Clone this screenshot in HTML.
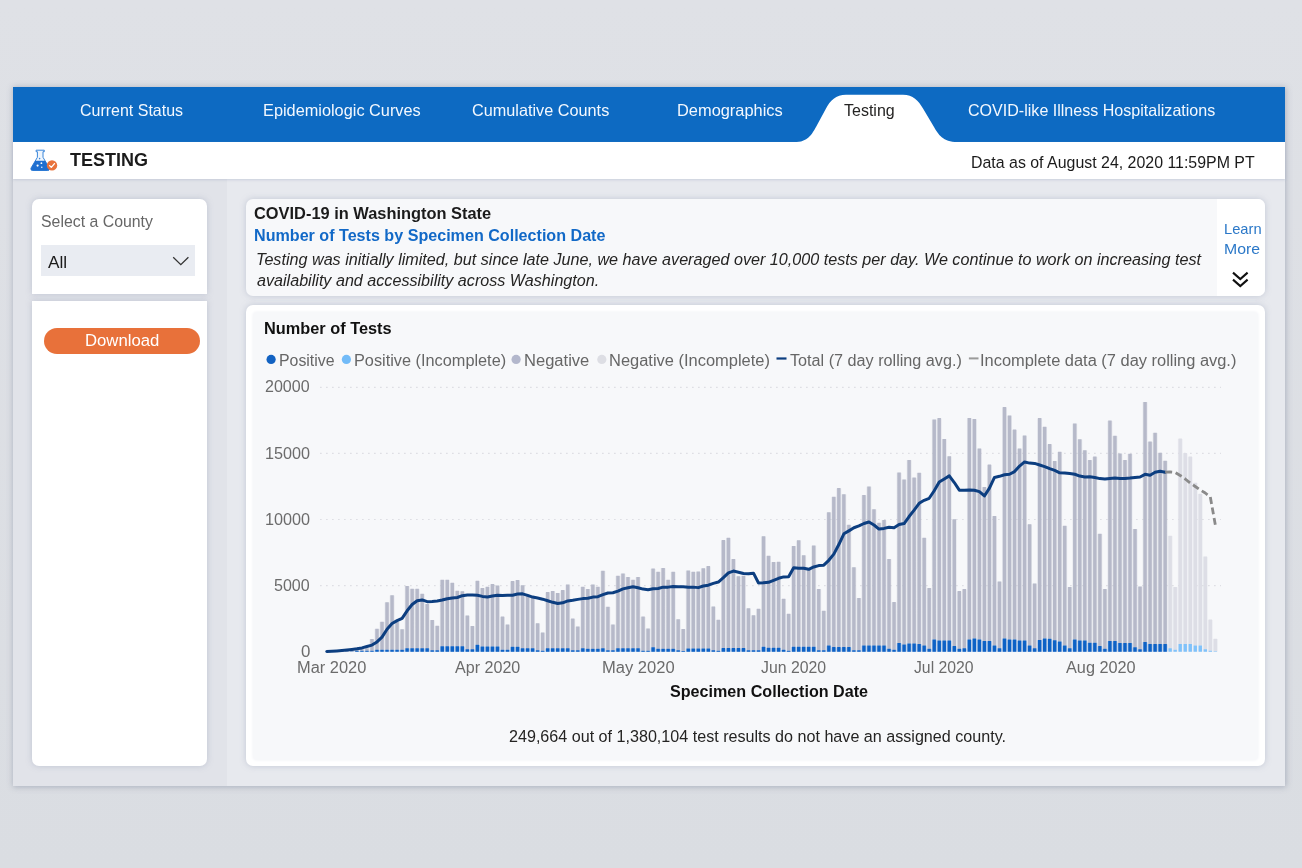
<!DOCTYPE html>
<html lang="en"><head><meta charset="utf-8"><title>COVID-19 Testing</title>
<style>
html,body{margin:0;padding:0}
body{width:1302px;height:868px;overflow:hidden;background:linear-gradient(#dfe1e6,#dadde2);position:relative;font-family:"Liberation Sans", Arial, sans-serif}
.abs{position:absolute}
.t{position:absolute;white-space:nowrap;line-height:1;transform-origin:0 50%;display:inline-block}
#frame{left:12.7px;top:87.3px;width:1272.2px;height:698.3px;background:#e7e9ee;box-shadow:0 0 6px 0.5px rgba(105,115,140,.42)}
#leftcol{left:12.7px;top:179px;width:214.5px;height:606.6px;background:#e1e3e9}
#nav{left:12.7px;top:87.3px;width:1272.2px;height:54.6px;background:#0d6ac2}
#titlebar{left:12.7px;top:141.8px;width:1272.2px;height:37.4px;background:#ffffff;box-shadow:0 1px 2.5px rgba(150,160,185,.35)}
.card{background:#fff;border-radius:7px;box-shadow:0 0 6px rgba(130,140,170,.36)}
</style></head><body>
<div id="frame" class="abs"></div>
<div id="leftcol" class="abs"></div>
<div id="nav" class="abs"></div>
<div id="titlebar" class="abs"></div>
<svg class="abs" style="left:0;top:0" width="1302" height="200" viewBox="0 0 1302 200">
<path d="M794.5,142.2 C808,142.2 812,134 816,127 L826,108.5 C830,100.5 836,94.7 846,94.7 L903,94.7 C913,94.7 918.5,100.5 923,108.5 L934,127 C938,134 943,142.2 957,142.2 Z" fill="#ffffff"/>
<!-- flask icon -->
<g id="flask">
<path d="M36.1,150.2h8.2v1.5h-1.3v5.6l6.3,10.6c.7,1.3-.1,2.6-1.6,2.6H32.7c-1.5,0-2.3-1.3-1.6-2.6l6.3-10.6v-5.6h-1.3z" fill="#eef5fd" stroke="#3a86d9" stroke-width="1"/>
<path d="M35.3,160.8H45.1L49.3,167.9c.7,1.3-.1,2.6-1.6,2.6H32.7c-1.5,0-2.3-1.3-1.6-2.6z" fill="#1f6fd0"/>
<circle cx="37.6" cy="165.6" r="1.1" fill="#fff"/><circle cx="41.4" cy="163.2" r=".9" fill="#fff"/><circle cx="41.8" cy="167.2" r=".7" fill="#fff"/><circle cx="39.6" cy="158.6" r=".8" fill="#3a86d9"/>
<circle cx="52" cy="165.4" r="5.2" fill="#e9733c"/>
<path d="M49.6,165.6l1.7,1.8l3.2,-3.8" fill="none" stroke="#fff" stroke-width="1.3" stroke-linecap="round" stroke-linejoin="round"/>
</g>
</svg>
<!-- sidebar cards -->
<div class="abs card" style="left:31.6px;top:199.2px;width:175.8px;height:95px;border-radius:7px 7px 0 0"></div>
<div class="abs card" style="left:31.6px;top:300.5px;width:175.8px;height:465.7px;border-radius:0 0 7px 7px"></div>
<div class="abs" style="left:41.3px;top:244.8px;width:153.9px;height:31.7px;background:#e9ecf2"></div>
<svg class="abs" style="left:170px;top:252px" width="24" height="18" viewBox="0 0 24 18"><path d="M3.2,5.2 L10.8,12.6 L18.4,5.2" fill="none" stroke="#333" stroke-width="1.3"/></svg>
<div class="abs" style="left:44.4px;top:327.7px;width:155.9px;height:26.6px;border-radius:13.3px;background:#e8713a"></div>
<!-- description card -->
<div class="abs card" style="left:246.4px;top:198.7px;width:1018.2px;height:97px;background:#f7f8fa"></div>
<div class="abs" style="left:1217.4px;top:198.7px;width:47.2px;height:97px;background:#fff;border-radius:0 7px 7px 0"></div>
<svg class="abs" style="left:1228px;top:268px" width="26" height="24" viewBox="0 0 26 24"><path d="M5,4.6 L12.3,11 L19.6,4.6 M5,11.6 L12.3,18 L19.6,11.6" fill="none" stroke="#111" stroke-width="2.1"/></svg>
<!-- chart card -->
<div class="abs card" style="left:246.4px;top:305.2px;width:1018.4px;height:461.1px"></div>
<div class="abs" style="left:253.4px;top:312px;width:1004.6px;height:447.5px;background:#f7f8fa;border-radius:4px;box-shadow:0 0 2.5px 1px #f7f8fa"></div>
<svg class="abs" style="left:0;top:0" width="1302" height="868" viewBox="0 0 1302 868">
<circle cx="271.1" cy="359.4" r="4.6" fill="#1262c2"/>
<circle cx="346.4" cy="359.4" r="4.6" fill="#72bbf8"/>
<circle cx="516.1" cy="359.4" r="4.6" fill="#b3b7cc"/>
<circle cx="601.8" cy="359.4" r="4.6" fill="#dddee4"/>
<rect x="776.5" y="357.4" width="10" height="2.2" fill="#0c3e80"/>
<rect x="968.9" y="357.4" width="9.6" height="2" fill="#9a9a9a"/>
<line x1="320" x2="1221" y1="585.6" y2="585.6" stroke="#dedfe4" stroke-width="1.2" stroke-dasharray="1.7 4.3"/>
<line x1="320" x2="1221" y1="519.5" y2="519.5" stroke="#dedfe4" stroke-width="1.2" stroke-dasharray="1.7 4.3"/>
<line x1="320" x2="1221" y1="453.4" y2="453.4" stroke="#dedfe4" stroke-width="1.2" stroke-dasharray="1.7 4.3"/>
<line x1="320" x2="1221" y1="387.3" y2="387.3" stroke="#dedfe4" stroke-width="1.2" stroke-dasharray="1.7 4.3"/>
<defs><filter id="soft" x="-2%" y="-2%" width="104%" height="104%"><feGaussianBlur stdDeviation="0.55"/></filter></defs><g filter="url(#soft)">
<path d="M324.40,651.70h4.8V651.70h-4.8zM329.42,651.70h4.8V651.70h-4.8zM334.44,651.50h4.8V651.70h-4.8zM339.46,651.20h4.8V651.70h-4.8zM344.48,651.00h4.8V651.70h-4.8zM349.50,650.50h4.8V651.70h-4.8zM354.52,648.00h4.8V651.70h-4.8zM359.54,649.00h4.8V651.70h-4.8zM364.56,648.50h4.8V651.70h-4.8zM369.58,639.30h4.8V651.70h-4.8zM374.60,629.00h4.8V651.70h-4.8zM379.62,622.00h4.8V651.70h-4.8zM384.64,602.50h4.8V651.70h-4.8zM389.66,595.50h4.8V651.70h-4.8zM394.68,622.00h4.8V651.70h-4.8zM399.70,629.50h4.8V651.70h-4.8zM404.72,586.30h4.8V651.70h-4.8zM409.74,589.00h4.8V651.70h-4.8zM414.76,589.00h4.8V651.70h-4.8zM419.78,594.00h4.8V651.70h-4.8zM424.80,604.20h4.8V651.70h-4.8zM429.82,620.30h4.8V651.70h-4.8zM434.84,626.00h4.8V651.70h-4.8zM439.86,580.00h4.8V651.70h-4.8zM444.88,580.00h4.8V651.70h-4.8zM449.90,583.00h4.8V651.70h-4.8zM454.92,591.00h4.8V651.70h-4.8zM459.94,591.50h4.8V651.70h-4.8zM464.96,615.70h4.8V651.70h-4.8zM469.98,626.30h4.8V651.70h-4.8zM475.00,581.00h4.8V651.70h-4.8zM480.02,588.30h4.8V651.70h-4.8zM485.04,587.10h4.8V651.70h-4.8zM490.06,584.40h4.8V651.70h-4.8zM495.08,585.80h4.8V651.70h-4.8zM500.10,616.90h4.8V651.70h-4.8zM505.12,624.70h4.8V651.70h-4.8zM510.14,581.40h4.8V651.70h-4.8zM515.16,580.20h4.8V651.70h-4.8zM520.18,585.50h4.8V651.70h-4.8zM525.20,595.00h4.8V651.70h-4.8zM530.22,598.00h4.8V651.70h-4.8zM535.24,623.50h4.8V651.70h-4.8zM540.26,632.80h4.8V651.70h-4.8zM545.28,592.40h4.8V651.70h-4.8zM550.30,591.30h4.8V651.70h-4.8zM555.32,593.20h4.8V651.70h-4.8zM560.34,590.40h4.8V651.70h-4.8zM565.36,584.80h4.8V651.70h-4.8zM570.38,618.90h4.8V651.70h-4.8zM575.40,626.70h4.8V651.70h-4.8zM580.42,587.10h4.8V651.70h-4.8zM585.44,589.20h4.8V651.70h-4.8zM590.46,584.80h4.8V651.70h-4.8zM595.48,587.10h4.8V651.70h-4.8zM600.50,571.00h4.8V651.70h-4.8zM605.52,607.10h4.8V651.70h-4.8zM610.54,624.70h4.8V651.70h-4.8zM615.56,576.00h4.8V651.70h-4.8zM620.58,573.70h4.8V651.70h-4.8zM625.60,577.20h4.8V651.70h-4.8zM630.62,580.00h4.8V651.70h-4.8zM635.64,577.20h4.8V651.70h-4.8zM640.66,616.90h4.8V651.70h-4.8zM645.68,628.80h4.8V651.70h-4.8zM650.70,568.90h4.8V651.70h-4.8zM655.72,572.10h4.8V651.70h-4.8zM660.74,568.20h4.8V651.70h-4.8zM665.76,580.00h4.8V651.70h-4.8zM670.78,572.10h4.8V651.70h-4.8zM675.80,619.60h4.8V651.70h-4.8zM680.82,629.30h4.8V651.70h-4.8zM685.84,570.70h4.8V651.70h-4.8zM690.86,572.10h4.8V651.70h-4.8zM695.88,571.70h4.8V651.70h-4.8zM700.90,568.60h4.8V651.70h-4.8zM705.92,566.40h4.8V651.70h-4.8zM710.94,606.70h4.8V651.70h-4.8zM715.96,620.10h4.8V651.70h-4.8zM720.98,540.40h4.8V651.70h-4.8zM726.00,538.10h4.8V651.70h-4.8zM731.02,559.20h4.8V651.70h-4.8zM736.04,576.60h4.8V651.70h-4.8zM741.06,576.00h4.8V651.70h-4.8zM746.08,608.60h4.8V651.70h-4.8zM751.10,615.50h4.8V651.70h-4.8zM756.12,609.00h4.8V651.70h-4.8zM761.14,536.60h4.8V651.70h-4.8zM766.16,556.00h4.8V651.70h-4.8zM771.18,562.30h4.8V651.70h-4.8zM776.20,562.10h4.8V651.70h-4.8zM781.22,599.00h4.8V651.70h-4.8zM786.24,614.10h4.8V651.70h-4.8zM791.26,546.30h4.8V651.70h-4.8zM796.28,540.50h4.8V651.70h-4.8zM801.30,555.50h4.8V651.70h-4.8zM806.32,569.70h4.8V651.70h-4.8zM811.34,545.80h4.8V651.70h-4.8zM816.36,589.20h4.8V651.70h-4.8zM821.38,611.10h4.8V651.70h-4.8zM826.40,512.50h4.8V651.70h-4.8zM831.42,497.10h4.8V651.70h-4.8zM836.44,488.40h4.8V651.70h-4.8zM841.46,494.60h4.8V651.70h-4.8zM846.48,525.10h4.8V651.70h-4.8zM851.50,567.60h4.8V651.70h-4.8zM856.52,598.30h4.8V651.70h-4.8zM861.54,495.40h4.8V651.70h-4.8zM866.56,486.70h4.8V651.70h-4.8zM871.58,509.50h4.8V651.70h-4.8zM876.60,523.00h4.8V651.70h-4.8zM881.62,520.30h4.8V651.70h-4.8zM886.64,559.30h4.8V651.70h-4.8zM891.66,602.40h4.8V651.70h-4.8zM896.68,472.80h4.8V651.70h-4.8zM901.70,479.70h4.8V651.70h-4.8zM906.72,460.30h4.8V651.70h-4.8zM911.74,477.90h4.8V651.70h-4.8zM916.76,473.00h4.8V651.70h-4.8zM921.78,538.10h4.8V651.70h-4.8zM926.80,588.30h4.8V651.70h-4.8zM931.82,419.80h4.8V651.70h-4.8zM936.84,418.40h4.8V651.70h-4.8zM941.86,439.20h4.8V651.70h-4.8zM946.88,456.60h4.8V651.70h-4.8zM951.90,519.50h4.8V651.70h-4.8zM956.92,591.40h4.8V651.70h-4.8zM961.94,589.40h4.8V651.70h-4.8zM966.96,418.20h4.8V651.70h-4.8zM971.98,419.30h4.8V651.70h-4.8zM977.00,448.80h4.8V651.70h-4.8zM982.02,487.30h4.8V651.70h-4.8zM987.04,464.90h4.8V651.70h-4.8zM992.06,516.20h4.8V651.70h-4.8zM997.08,581.70h4.8V651.70h-4.8zM1002.10,407.40h4.8V651.70h-4.8zM1007.12,415.80h4.8V651.70h-4.8zM1012.14,429.90h4.8V651.70h-4.8zM1017.16,448.80h4.8V651.70h-4.8zM1022.18,435.80h4.8V651.70h-4.8zM1027.20,524.50h4.8V651.70h-4.8zM1032.22,583.80h4.8V651.70h-4.8zM1037.24,418.40h4.8V651.70h-4.8zM1042.26,427.10h4.8V651.70h-4.8zM1047.28,444.40h4.8V651.70h-4.8zM1052.30,461.30h4.8V651.70h-4.8zM1057.32,452.00h4.8V651.70h-4.8zM1062.34,526.10h4.8V651.70h-4.8zM1067.36,587.30h4.8V651.70h-4.8zM1072.38,423.70h4.8V651.70h-4.8zM1077.40,439.60h4.8V651.70h-4.8zM1082.42,450.60h4.8V651.70h-4.8zM1087.44,460.30h4.8V651.70h-4.8zM1092.46,456.90h4.8V651.70h-4.8zM1097.48,534.00h4.8V651.70h-4.8zM1102.50,589.40h4.8V651.70h-4.8zM1107.52,420.90h4.8V651.70h-4.8zM1112.54,436.10h4.8V651.70h-4.8zM1117.56,453.80h4.8V651.70h-4.8zM1122.58,460.30h4.8V651.70h-4.8zM1127.60,454.10h4.8V651.70h-4.8zM1132.62,529.20h4.8V651.70h-4.8zM1137.64,586.70h4.8V651.70h-4.8zM1142.66,402.30h4.8V651.70h-4.8zM1147.68,441.90h4.8V651.70h-4.8zM1152.70,433.10h4.8V651.70h-4.8zM1157.72,453.00h4.8V651.70h-4.8zM1162.74,461.00h4.8V651.70h-4.8z" fill="#b6b9c9" opacity=".3"/>
<path d="M1167.76,536.10h4.8V651.70h-4.8zM1172.78,587.30h4.8V651.70h-4.8zM1177.80,438.90h4.8V651.70h-4.8zM1182.82,453.40h4.8V651.70h-4.8zM1187.84,456.90h4.8V651.70h-4.8zM1192.86,483.00h4.8V651.70h-4.8zM1197.88,494.00h4.8V651.70h-4.8zM1202.90,556.80h4.8V651.70h-4.8zM1207.92,619.90h4.8V651.70h-4.8zM1212.94,639.10h4.8V651.70h-4.8z" fill="#dddee6" opacity=".4"/>
<path d="M325.10,651.40h3.4V651.40h-3.4zM330.12,651.40h3.4V651.40h-3.4zM335.14,651.20h3.4V651.40h-3.4zM340.16,650.90h3.4V651.40h-3.4zM345.18,650.70h3.4V651.40h-3.4zM350.20,650.20h3.4V651.40h-3.4zM355.22,647.70h3.4V650.70h-3.4zM360.24,648.70h3.4V650.70h-3.4zM365.26,648.20h3.4V650.70h-3.4zM370.28,639.00h3.4V650.70h-3.4zM375.30,628.70h3.4V649.70h-3.4zM380.32,621.70h3.4V649.70h-3.4zM385.34,602.20h3.4V649.70h-3.4zM390.36,595.20h3.4V649.70h-3.4zM395.38,621.70h3.4V649.70h-3.4zM400.40,629.20h3.4V649.70h-3.4zM405.42,586.00h3.4V648.20h-3.4zM410.44,588.70h3.4V648.20h-3.4zM415.46,588.70h3.4V648.20h-3.4zM420.48,593.70h3.4V648.20h-3.4zM425.50,603.90h3.4V648.20h-3.4zM430.52,620.00h3.4V650.20h-3.4zM435.54,625.70h3.4V650.20h-3.4zM440.56,579.70h3.4V646.30h-3.4zM445.58,579.70h3.4V646.30h-3.4zM450.60,582.70h3.4V646.30h-3.4zM455.62,590.70h3.4V646.30h-3.4zM460.64,591.20h3.4V646.30h-3.4zM465.66,615.40h3.4V649.20h-3.4zM470.68,626.00h3.4V649.20h-3.4zM475.70,580.70h3.4V644.70h-3.4zM480.72,588.00h3.4V646.50h-3.4zM485.74,586.80h3.4V646.50h-3.4zM490.76,584.10h3.4V646.50h-3.4zM495.78,585.50h3.4V646.50h-3.4zM500.80,616.60h3.4V649.70h-3.4zM505.82,624.40h3.4V649.70h-3.4zM510.84,581.10h3.4V646.70h-3.4zM515.86,579.90h3.4V646.70h-3.4zM520.88,585.20h3.4V648.20h-3.4zM525.90,594.70h3.4V648.20h-3.4zM530.92,597.70h3.4V648.20h-3.4zM535.94,623.20h3.4V650.20h-3.4zM540.96,632.50h3.4V650.70h-3.4zM545.98,592.10h3.4V648.20h-3.4zM551.00,591.00h3.4V648.20h-3.4zM556.02,592.90h3.4V648.20h-3.4zM561.04,590.10h3.4V648.20h-3.4zM566.06,584.50h3.4V648.20h-3.4zM571.08,618.60h3.4V650.20h-3.4zM576.10,626.40h3.4V650.20h-3.4zM581.12,586.80h3.4V648.20h-3.4zM586.14,588.90h3.4V648.70h-3.4zM591.16,584.50h3.4V648.70h-3.4zM596.18,586.80h3.4V648.70h-3.4zM601.20,570.70h3.4V648.20h-3.4zM606.22,606.80h3.4V650.20h-3.4zM611.24,624.40h3.4V650.20h-3.4zM616.26,575.70h3.4V648.20h-3.4zM621.28,573.40h3.4V648.20h-3.4zM626.30,576.90h3.4V648.20h-3.4zM631.32,579.70h3.4V648.20h-3.4zM636.34,576.90h3.4V648.20h-3.4zM641.36,616.60h3.4V650.70h-3.4zM646.38,628.50h3.4V650.70h-3.4zM651.40,568.60h3.4V647.20h-3.4zM656.42,571.80h3.4V648.70h-3.4zM661.44,567.90h3.4V648.70h-3.4zM666.46,579.70h3.4V648.70h-3.4zM671.48,571.80h3.4V648.70h-3.4zM676.50,619.30h3.4V650.20h-3.4zM681.52,629.00h3.4V650.90h-3.4zM686.54,570.40h3.4V648.40h-3.4zM691.56,571.80h3.4V648.40h-3.4zM696.58,571.40h3.4V648.40h-3.4zM701.60,568.30h3.4V648.40h-3.4zM706.62,566.10h3.4V648.40h-3.4zM711.64,606.40h3.4V650.20h-3.4zM716.66,619.80h3.4V650.70h-3.4zM721.68,540.10h3.4V648.10h-3.4zM726.70,537.80h3.4V648.10h-3.4zM731.72,558.90h3.4V648.10h-3.4zM736.74,576.30h3.4V648.10h-3.4zM741.76,575.70h3.4V648.10h-3.4zM746.78,608.30h3.4V650.20h-3.4zM751.80,615.20h3.4V650.20h-3.4zM756.82,608.70h3.4V650.20h-3.4zM761.84,536.30h3.4V646.70h-3.4zM766.86,555.70h3.4V647.70h-3.4zM771.88,562.00h3.4V647.70h-3.4zM776.90,561.80h3.4V647.70h-3.4zM781.92,598.70h3.4V649.70h-3.4zM786.94,613.80h3.4V650.70h-3.4zM791.96,546.00h3.4V646.70h-3.4zM796.98,540.20h3.4V646.70h-3.4zM802.00,555.20h3.4V646.70h-3.4zM807.02,569.40h3.4V646.70h-3.4zM812.04,545.50h3.4V646.70h-3.4zM817.06,588.90h3.4V650.20h-3.4zM822.08,610.80h3.4V650.20h-3.4zM827.10,512.20h3.4V645.50h-3.4zM832.12,496.80h3.4V647.10h-3.4zM837.14,488.10h3.4V647.10h-3.4zM842.16,494.30h3.4V647.10h-3.4zM847.18,524.80h3.4V647.10h-3.4zM852.20,567.30h3.4V650.20h-3.4zM857.22,598.00h3.4V650.20h-3.4zM862.24,495.10h3.4V645.50h-3.4zM867.26,486.40h3.4V645.50h-3.4zM872.28,509.20h3.4V645.50h-3.4zM877.30,522.70h3.4V645.50h-3.4zM882.32,520.00h3.4V645.50h-3.4zM887.34,559.00h3.4V648.70h-3.4zM892.36,602.10h3.4V649.70h-3.4zM897.38,472.50h3.4V643.00h-3.4zM902.40,479.40h3.4V644.40h-3.4zM907.42,460.00h3.4V643.40h-3.4zM912.44,477.60h3.4V643.40h-3.4zM917.46,472.70h3.4V644.00h-3.4zM922.48,537.80h3.4V645.50h-3.4zM927.50,588.00h3.4V648.70h-3.4zM932.52,419.50h3.4V639.50h-3.4zM937.54,418.10h3.4V640.50h-3.4zM942.56,438.90h3.4V640.50h-3.4zM947.58,456.30h3.4V640.50h-3.4zM952.60,519.20h3.4V646.10h-3.4zM957.62,591.10h3.4V648.70h-3.4zM962.64,589.10h3.4V648.20h-3.4zM967.66,417.90h3.4V639.50h-3.4zM972.68,419.00h3.4V638.40h-3.4zM977.70,448.50h3.4V639.50h-3.4zM982.72,487.00h3.4V640.90h-3.4zM987.74,464.60h3.4V640.90h-3.4zM992.76,515.90h3.4V645.50h-3.4zM997.78,581.40h3.4V648.20h-3.4zM1002.80,407.10h3.4V638.40h-3.4zM1007.82,415.50h3.4V639.50h-3.4zM1012.84,429.60h3.4V639.50h-3.4zM1017.86,448.50h3.4V640.50h-3.4zM1022.88,435.50h3.4V640.50h-3.4zM1027.90,524.20h3.4V645.50h-3.4zM1032.92,583.50h3.4V648.20h-3.4zM1037.94,418.10h3.4V639.90h-3.4zM1042.96,426.80h3.4V638.40h-3.4zM1047.98,444.10h3.4V638.80h-3.4zM1053.00,461.00h3.4V640.30h-3.4zM1058.02,451.70h3.4V641.50h-3.4zM1063.04,525.80h3.4V645.50h-3.4zM1068.06,587.00h3.4V648.20h-3.4zM1073.08,423.40h3.4V639.50h-3.4zM1078.10,439.30h3.4V640.50h-3.4zM1083.12,450.30h3.4V640.50h-3.4zM1088.14,460.00h3.4V642.70h-3.4zM1093.16,456.60h3.4V642.70h-3.4zM1098.18,533.70h3.4V646.10h-3.4zM1103.20,589.10h3.4V648.70h-3.4zM1108.22,420.60h3.4V640.90h-3.4zM1113.24,435.80h3.4V640.90h-3.4zM1118.26,453.50h3.4V643.00h-3.4zM1123.28,460.00h3.4V643.00h-3.4zM1128.30,453.80h3.4V643.00h-3.4zM1133.32,528.90h3.4V647.20h-3.4zM1138.34,586.40h3.4V649.20h-3.4zM1143.36,402.00h3.4V642.00h-3.4zM1148.38,441.60h3.4V644.00h-3.4zM1153.40,432.80h3.4V644.00h-3.4zM1158.42,452.70h3.4V644.00h-3.4zM1163.44,460.70h3.4V644.00h-3.4z" fill="#b6b9c9"/>
<path d="M1168.46,535.80h3.4V648.20h-3.4zM1173.48,587.00h3.4V649.80h-3.4zM1178.50,438.60h3.4V644.00h-3.4zM1183.52,453.10h3.4V644.00h-3.4zM1188.54,456.60h3.4V644.00h-3.4zM1193.56,482.70h3.4V645.50h-3.4zM1198.58,493.70h3.4V645.50h-3.4zM1203.60,556.50h3.4V649.20h-3.4zM1208.62,619.60h3.4V650.70h-3.4zM1213.64,638.80h3.4V651.20h-3.4z" fill="#dddee6"/>
<path d="M324.40,651.70h4.8V651.70h-4.8zM329.42,651.70h4.8V651.70h-4.8zM334.44,651.70h4.8V651.70h-4.8zM339.46,651.70h4.8V651.70h-4.8zM344.48,651.70h4.8V651.70h-4.8zM349.50,651.70h4.8V651.70h-4.8zM354.52,651.00h4.8V651.70h-4.8zM359.54,651.00h4.8V651.70h-4.8zM364.56,651.00h4.8V651.70h-4.8zM369.58,651.00h4.8V651.70h-4.8zM374.60,650.00h4.8V651.70h-4.8zM379.62,650.00h4.8V651.70h-4.8zM384.64,650.00h4.8V651.70h-4.8zM389.66,650.00h4.8V651.70h-4.8zM394.68,650.00h4.8V651.70h-4.8zM399.70,650.00h4.8V651.70h-4.8zM404.72,648.50h4.8V651.70h-4.8zM409.74,648.50h4.8V651.70h-4.8zM414.76,648.50h4.8V651.70h-4.8zM419.78,648.50h4.8V651.70h-4.8zM424.80,648.50h4.8V651.70h-4.8zM429.82,650.50h4.8V651.70h-4.8zM434.84,650.50h4.8V651.70h-4.8zM439.86,646.60h4.8V651.70h-4.8zM444.88,646.60h4.8V651.70h-4.8zM449.90,646.60h4.8V651.70h-4.8zM454.92,646.60h4.8V651.70h-4.8zM459.94,646.60h4.8V651.70h-4.8zM464.96,649.50h4.8V651.70h-4.8zM469.98,649.50h4.8V651.70h-4.8zM475.00,645.00h4.8V651.70h-4.8zM480.02,646.80h4.8V651.70h-4.8zM485.04,646.80h4.8V651.70h-4.8zM490.06,646.80h4.8V651.70h-4.8zM495.08,646.80h4.8V651.70h-4.8zM500.10,650.00h4.8V651.70h-4.8zM505.12,650.00h4.8V651.70h-4.8zM510.14,647.00h4.8V651.70h-4.8zM515.16,647.00h4.8V651.70h-4.8zM520.18,648.50h4.8V651.70h-4.8zM525.20,648.50h4.8V651.70h-4.8zM530.22,648.50h4.8V651.70h-4.8zM535.24,650.50h4.8V651.70h-4.8zM540.26,651.00h4.8V651.70h-4.8zM545.28,648.50h4.8V651.70h-4.8zM550.30,648.50h4.8V651.70h-4.8zM555.32,648.50h4.8V651.70h-4.8zM560.34,648.50h4.8V651.70h-4.8zM565.36,648.50h4.8V651.70h-4.8zM570.38,650.50h4.8V651.70h-4.8zM575.40,650.50h4.8V651.70h-4.8zM580.42,648.50h4.8V651.70h-4.8zM585.44,649.00h4.8V651.70h-4.8zM590.46,649.00h4.8V651.70h-4.8zM595.48,649.00h4.8V651.70h-4.8zM600.50,648.50h4.8V651.70h-4.8zM605.52,650.50h4.8V651.70h-4.8zM610.54,650.50h4.8V651.70h-4.8zM615.56,648.50h4.8V651.70h-4.8zM620.58,648.50h4.8V651.70h-4.8zM625.60,648.50h4.8V651.70h-4.8zM630.62,648.50h4.8V651.70h-4.8zM635.64,648.50h4.8V651.70h-4.8zM640.66,651.00h4.8V651.70h-4.8zM645.68,651.00h4.8V651.70h-4.8zM650.70,647.50h4.8V651.70h-4.8zM655.72,649.00h4.8V651.70h-4.8zM660.74,649.00h4.8V651.70h-4.8zM665.76,649.00h4.8V651.70h-4.8zM670.78,649.00h4.8V651.70h-4.8zM675.80,650.50h4.8V651.70h-4.8zM680.82,651.20h4.8V651.70h-4.8zM685.84,648.70h4.8V651.70h-4.8zM690.86,648.70h4.8V651.70h-4.8zM695.88,648.70h4.8V651.70h-4.8zM700.90,648.70h4.8V651.70h-4.8zM705.92,648.70h4.8V651.70h-4.8zM710.94,650.50h4.8V651.70h-4.8zM715.96,651.00h4.8V651.70h-4.8zM720.98,648.40h4.8V651.70h-4.8zM726.00,648.40h4.8V651.70h-4.8zM731.02,648.40h4.8V651.70h-4.8zM736.04,648.40h4.8V651.70h-4.8zM741.06,648.40h4.8V651.70h-4.8zM746.08,650.50h4.8V651.70h-4.8zM751.10,650.50h4.8V651.70h-4.8zM756.12,650.50h4.8V651.70h-4.8zM761.14,647.00h4.8V651.70h-4.8zM766.16,648.00h4.8V651.70h-4.8zM771.18,648.00h4.8V651.70h-4.8zM776.20,648.00h4.8V651.70h-4.8zM781.22,650.00h4.8V651.70h-4.8zM786.24,651.00h4.8V651.70h-4.8zM791.26,647.00h4.8V651.70h-4.8zM796.28,647.00h4.8V651.70h-4.8zM801.30,647.00h4.8V651.70h-4.8zM806.32,647.00h4.8V651.70h-4.8zM811.34,647.00h4.8V651.70h-4.8zM816.36,650.50h4.8V651.70h-4.8zM821.38,650.50h4.8V651.70h-4.8zM826.40,645.80h4.8V651.70h-4.8zM831.42,647.40h4.8V651.70h-4.8zM836.44,647.40h4.8V651.70h-4.8zM841.46,647.40h4.8V651.70h-4.8zM846.48,647.40h4.8V651.70h-4.8zM851.50,650.50h4.8V651.70h-4.8zM856.52,650.50h4.8V651.70h-4.8zM861.54,645.80h4.8V651.70h-4.8zM866.56,645.80h4.8V651.70h-4.8zM871.58,645.80h4.8V651.70h-4.8zM876.60,645.80h4.8V651.70h-4.8zM881.62,645.80h4.8V651.70h-4.8zM886.64,649.00h4.8V651.70h-4.8zM891.66,650.00h4.8V651.70h-4.8zM896.68,643.30h4.8V651.70h-4.8zM901.70,644.70h4.8V651.70h-4.8zM906.72,643.70h4.8V651.70h-4.8zM911.74,643.70h4.8V651.70h-4.8zM916.76,644.30h4.8V651.70h-4.8zM921.78,645.80h4.8V651.70h-4.8zM926.80,649.00h4.8V651.70h-4.8zM931.82,639.80h4.8V651.70h-4.8zM936.84,640.80h4.8V651.70h-4.8zM941.86,640.80h4.8V651.70h-4.8zM946.88,640.80h4.8V651.70h-4.8zM951.90,646.40h4.8V651.70h-4.8zM956.92,649.00h4.8V651.70h-4.8zM961.94,648.50h4.8V651.70h-4.8zM966.96,639.80h4.8V651.70h-4.8zM971.98,638.70h4.8V651.70h-4.8zM977.00,639.80h4.8V651.70h-4.8zM982.02,641.20h4.8V651.70h-4.8zM987.04,641.20h4.8V651.70h-4.8zM992.06,645.80h4.8V651.70h-4.8zM997.08,648.50h4.8V651.70h-4.8zM1002.10,638.70h4.8V651.70h-4.8zM1007.12,639.80h4.8V651.70h-4.8zM1012.14,639.80h4.8V651.70h-4.8zM1017.16,640.80h4.8V651.70h-4.8zM1022.18,640.80h4.8V651.70h-4.8zM1027.20,645.80h4.8V651.70h-4.8zM1032.22,648.50h4.8V651.70h-4.8zM1037.24,640.20h4.8V651.70h-4.8zM1042.26,638.70h4.8V651.70h-4.8zM1047.28,639.10h4.8V651.70h-4.8zM1052.30,640.60h4.8V651.70h-4.8zM1057.32,641.80h4.8V651.70h-4.8zM1062.34,645.80h4.8V651.70h-4.8zM1067.36,648.50h4.8V651.70h-4.8zM1072.38,639.80h4.8V651.70h-4.8zM1077.40,640.80h4.8V651.70h-4.8zM1082.42,640.80h4.8V651.70h-4.8zM1087.44,643.00h4.8V651.70h-4.8zM1092.46,643.00h4.8V651.70h-4.8zM1097.48,646.40h4.8V651.70h-4.8zM1102.50,649.00h4.8V651.70h-4.8zM1107.52,641.20h4.8V651.70h-4.8zM1112.54,641.20h4.8V651.70h-4.8zM1117.56,643.30h4.8V651.70h-4.8zM1122.58,643.30h4.8V651.70h-4.8zM1127.60,643.30h4.8V651.70h-4.8zM1132.62,647.50h4.8V651.70h-4.8zM1137.64,649.50h4.8V651.70h-4.8zM1142.66,642.30h4.8V651.70h-4.8zM1147.68,644.30h4.8V651.70h-4.8zM1152.70,644.30h4.8V651.70h-4.8zM1157.72,644.30h4.8V651.70h-4.8zM1162.74,644.30h4.8V651.70h-4.8z" fill="#3f83d6" opacity=".3"/>
<path d="M325.10,651.40h3.4V651.70h-3.4zM330.12,651.40h3.4V651.70h-3.4zM335.14,651.40h3.4V651.70h-3.4zM340.16,651.40h3.4V651.70h-3.4zM345.18,651.40h3.4V651.70h-3.4zM350.20,651.40h3.4V651.70h-3.4zM355.22,650.70h3.4V651.70h-3.4zM360.24,650.70h3.4V651.70h-3.4zM365.26,650.70h3.4V651.70h-3.4zM370.28,650.70h3.4V651.70h-3.4zM375.30,649.70h3.4V651.70h-3.4zM380.32,649.70h3.4V651.70h-3.4zM385.34,649.70h3.4V651.70h-3.4zM390.36,649.70h3.4V651.70h-3.4zM395.38,649.70h3.4V651.70h-3.4zM400.40,649.70h3.4V651.70h-3.4zM405.42,648.20h3.4V651.70h-3.4zM410.44,648.20h3.4V651.70h-3.4zM415.46,648.20h3.4V651.70h-3.4zM420.48,648.20h3.4V651.70h-3.4zM425.50,648.20h3.4V651.70h-3.4zM430.52,650.20h3.4V651.70h-3.4zM435.54,650.20h3.4V651.70h-3.4zM440.56,646.30h3.4V651.70h-3.4zM445.58,646.30h3.4V651.70h-3.4zM450.60,646.30h3.4V651.70h-3.4zM455.62,646.30h3.4V651.70h-3.4zM460.64,646.30h3.4V651.70h-3.4zM465.66,649.20h3.4V651.70h-3.4zM470.68,649.20h3.4V651.70h-3.4zM475.70,644.70h3.4V651.70h-3.4zM480.72,646.50h3.4V651.70h-3.4zM485.74,646.50h3.4V651.70h-3.4zM490.76,646.50h3.4V651.70h-3.4zM495.78,646.50h3.4V651.70h-3.4zM500.80,649.70h3.4V651.70h-3.4zM505.82,649.70h3.4V651.70h-3.4zM510.84,646.70h3.4V651.70h-3.4zM515.86,646.70h3.4V651.70h-3.4zM520.88,648.20h3.4V651.70h-3.4zM525.90,648.20h3.4V651.70h-3.4zM530.92,648.20h3.4V651.70h-3.4zM535.94,650.20h3.4V651.70h-3.4zM540.96,650.70h3.4V651.70h-3.4zM545.98,648.20h3.4V651.70h-3.4zM551.00,648.20h3.4V651.70h-3.4zM556.02,648.20h3.4V651.70h-3.4zM561.04,648.20h3.4V651.70h-3.4zM566.06,648.20h3.4V651.70h-3.4zM571.08,650.20h3.4V651.70h-3.4zM576.10,650.20h3.4V651.70h-3.4zM581.12,648.20h3.4V651.70h-3.4zM586.14,648.70h3.4V651.70h-3.4zM591.16,648.70h3.4V651.70h-3.4zM596.18,648.70h3.4V651.70h-3.4zM601.20,648.20h3.4V651.70h-3.4zM606.22,650.20h3.4V651.70h-3.4zM611.24,650.20h3.4V651.70h-3.4zM616.26,648.20h3.4V651.70h-3.4zM621.28,648.20h3.4V651.70h-3.4zM626.30,648.20h3.4V651.70h-3.4zM631.32,648.20h3.4V651.70h-3.4zM636.34,648.20h3.4V651.70h-3.4zM641.36,650.70h3.4V651.70h-3.4zM646.38,650.70h3.4V651.70h-3.4zM651.40,647.20h3.4V651.70h-3.4zM656.42,648.70h3.4V651.70h-3.4zM661.44,648.70h3.4V651.70h-3.4zM666.46,648.70h3.4V651.70h-3.4zM671.48,648.70h3.4V651.70h-3.4zM676.50,650.20h3.4V651.70h-3.4zM681.52,650.90h3.4V651.70h-3.4zM686.54,648.40h3.4V651.70h-3.4zM691.56,648.40h3.4V651.70h-3.4zM696.58,648.40h3.4V651.70h-3.4zM701.60,648.40h3.4V651.70h-3.4zM706.62,648.40h3.4V651.70h-3.4zM711.64,650.20h3.4V651.70h-3.4zM716.66,650.70h3.4V651.70h-3.4zM721.68,648.10h3.4V651.70h-3.4zM726.70,648.10h3.4V651.70h-3.4zM731.72,648.10h3.4V651.70h-3.4zM736.74,648.10h3.4V651.70h-3.4zM741.76,648.10h3.4V651.70h-3.4zM746.78,650.20h3.4V651.70h-3.4zM751.80,650.20h3.4V651.70h-3.4zM756.82,650.20h3.4V651.70h-3.4zM761.84,646.70h3.4V651.70h-3.4zM766.86,647.70h3.4V651.70h-3.4zM771.88,647.70h3.4V651.70h-3.4zM776.90,647.70h3.4V651.70h-3.4zM781.92,649.70h3.4V651.70h-3.4zM786.94,650.70h3.4V651.70h-3.4zM791.96,646.70h3.4V651.70h-3.4zM796.98,646.70h3.4V651.70h-3.4zM802.00,646.70h3.4V651.70h-3.4zM807.02,646.70h3.4V651.70h-3.4zM812.04,646.70h3.4V651.70h-3.4zM817.06,650.20h3.4V651.70h-3.4zM822.08,650.20h3.4V651.70h-3.4zM827.10,645.50h3.4V651.70h-3.4zM832.12,647.10h3.4V651.70h-3.4zM837.14,647.10h3.4V651.70h-3.4zM842.16,647.10h3.4V651.70h-3.4zM847.18,647.10h3.4V651.70h-3.4zM852.20,650.20h3.4V651.70h-3.4zM857.22,650.20h3.4V651.70h-3.4zM862.24,645.50h3.4V651.70h-3.4zM867.26,645.50h3.4V651.70h-3.4zM872.28,645.50h3.4V651.70h-3.4zM877.30,645.50h3.4V651.70h-3.4zM882.32,645.50h3.4V651.70h-3.4zM887.34,648.70h3.4V651.70h-3.4zM892.36,649.70h3.4V651.70h-3.4zM897.38,643.00h3.4V651.70h-3.4zM902.40,644.40h3.4V651.70h-3.4zM907.42,643.40h3.4V651.70h-3.4zM912.44,643.40h3.4V651.70h-3.4zM917.46,644.00h3.4V651.70h-3.4zM922.48,645.50h3.4V651.70h-3.4zM927.50,648.70h3.4V651.70h-3.4zM932.52,639.50h3.4V651.70h-3.4zM937.54,640.50h3.4V651.70h-3.4zM942.56,640.50h3.4V651.70h-3.4zM947.58,640.50h3.4V651.70h-3.4zM952.60,646.10h3.4V651.70h-3.4zM957.62,648.70h3.4V651.70h-3.4zM962.64,648.20h3.4V651.70h-3.4zM967.66,639.50h3.4V651.70h-3.4zM972.68,638.40h3.4V651.70h-3.4zM977.70,639.50h3.4V651.70h-3.4zM982.72,640.90h3.4V651.70h-3.4zM987.74,640.90h3.4V651.70h-3.4zM992.76,645.50h3.4V651.70h-3.4zM997.78,648.20h3.4V651.70h-3.4zM1002.80,638.40h3.4V651.70h-3.4zM1007.82,639.50h3.4V651.70h-3.4zM1012.84,639.50h3.4V651.70h-3.4zM1017.86,640.50h3.4V651.70h-3.4zM1022.88,640.50h3.4V651.70h-3.4zM1027.90,645.50h3.4V651.70h-3.4zM1032.92,648.20h3.4V651.70h-3.4zM1037.94,639.90h3.4V651.70h-3.4zM1042.96,638.40h3.4V651.70h-3.4zM1047.98,638.80h3.4V651.70h-3.4zM1053.00,640.30h3.4V651.70h-3.4zM1058.02,641.50h3.4V651.70h-3.4zM1063.04,645.50h3.4V651.70h-3.4zM1068.06,648.20h3.4V651.70h-3.4zM1073.08,639.50h3.4V651.70h-3.4zM1078.10,640.50h3.4V651.70h-3.4zM1083.12,640.50h3.4V651.70h-3.4zM1088.14,642.70h3.4V651.70h-3.4zM1093.16,642.70h3.4V651.70h-3.4zM1098.18,646.10h3.4V651.70h-3.4zM1103.20,648.70h3.4V651.70h-3.4zM1108.22,640.90h3.4V651.70h-3.4zM1113.24,640.90h3.4V651.70h-3.4zM1118.26,643.00h3.4V651.70h-3.4zM1123.28,643.00h3.4V651.70h-3.4zM1128.30,643.00h3.4V651.70h-3.4zM1133.32,647.20h3.4V651.70h-3.4zM1138.34,649.20h3.4V651.70h-3.4zM1143.36,642.00h3.4V651.70h-3.4zM1148.38,644.00h3.4V651.70h-3.4zM1153.40,644.00h3.4V651.70h-3.4zM1158.42,644.00h3.4V651.70h-3.4zM1163.44,644.00h3.4V651.70h-3.4z" fill="#0f62c6"/>
<path d="M1168.46,648.20h3.4V651.70h-3.4zM1173.48,649.80h3.4V651.70h-3.4zM1178.50,644.00h3.4V651.70h-3.4zM1183.52,644.00h3.4V651.70h-3.4zM1188.54,644.00h3.4V651.70h-3.4zM1193.56,645.50h3.4V651.70h-3.4zM1198.58,645.50h3.4V651.70h-3.4zM1203.60,649.20h3.4V651.70h-3.4zM1208.62,650.70h3.4V651.70h-3.4zM1213.64,651.20h3.4V651.70h-3.4z" fill="#80c2fa"/>
</g>
<path d="M326.80,651.50 L331.82,651.30 L336.84,651.00 L341.86,650.60 L346.88,650.10 L351.90,649.50 L356.92,648.80 L361.94,647.90 L366.96,646.50 L371.98,645.10 L377.00,641.90 L382.02,637.10 L387.04,629.20 L392.06,623.50 L397.08,620.60 L402.10,618.30 L407.12,610.80 L412.14,604.50 L417.16,600.70 L422.18,599.90 L427.20,601.70 L432.22,601.46 L437.24,600.96 L442.26,600.06 L447.28,598.77 L452.30,597.91 L457.32,597.49 L462.34,595.67 L467.36,595.01 L472.38,595.06 L477.40,595.20 L482.42,596.39 L487.44,596.97 L492.46,596.03 L497.48,595.21 L502.50,595.39 L507.52,595.16 L512.54,595.21 L517.56,594.06 L522.58,593.83 L527.60,595.34 L532.62,597.09 L537.64,598.03 L542.66,599.19 L547.68,600.76 L552.70,602.34 L557.72,603.44 L562.74,602.79 L567.76,600.90 L572.78,600.24 L577.80,599.37 L582.82,598.61 L587.84,598.31 L592.86,597.11 L597.88,596.64 L602.90,594.67 L607.92,592.99 L612.94,592.70 L617.96,591.11 L622.98,588.90 L628.00,587.81 L633.02,586.80 L638.04,587.69 L643.06,589.09 L648.08,589.67 L653.10,588.66 L658.12,588.43 L663.14,587.14 L668.16,587.14 L673.18,586.41 L678.20,586.80 L683.22,586.87 L688.24,587.13 L693.26,587.13 L698.28,587.63 L703.30,586.00 L708.32,585.19 L713.34,583.34 L718.36,582.03 L723.38,577.70 L728.40,572.84 L733.42,571.06 L738.44,572.20 L743.46,573.57 L748.48,573.84 L753.50,573.19 L758.52,582.99 L763.54,582.77 L768.56,582.31 L773.58,580.27 L778.60,578.29 L783.62,576.91 L788.64,576.71 L793.66,567.76 L798.68,568.31 L803.70,568.24 L808.72,569.30 L813.74,566.97 L818.76,565.57 L823.78,565.14 L828.80,560.31 L833.82,554.11 L838.84,544.53 L843.86,533.80 L848.88,530.84 L853.90,527.76 L858.92,525.93 L863.94,523.49 L868.96,522.00 L873.98,525.01 L879.00,529.07 L884.02,528.39 L889.04,527.20 L894.06,527.79 L899.08,524.56 L904.10,523.56 L909.12,516.53 L914.14,510.09 L919.16,503.33 L924.18,500.30 L929.20,498.29 L934.22,490.71 L939.24,481.96 L944.26,478.94 L949.28,475.90 L954.30,482.54 L959.32,490.16 L964.34,490.31 L969.36,490.09 L974.38,490.21 L979.40,491.59 L984.42,495.97 L989.44,488.17 L994.46,477.43 L999.48,476.33 L1004.50,474.79 L1009.52,474.29 L1014.54,471.59 L1019.56,466.09 L1024.58,461.93 L1029.60,463.11 L1034.62,463.41 L1039.64,464.99 L1044.66,466.60 L1049.68,468.67 L1054.70,470.46 L1059.72,472.77 L1064.74,473.00 L1069.76,473.50 L1074.78,474.26 L1079.80,476.04 L1084.82,476.93 L1089.84,476.79 L1094.86,477.49 L1099.88,478.61 L1104.90,478.91 L1109.92,478.51 L1114.94,478.01 L1119.96,478.47 L1124.98,478.47 L1130.00,478.07 L1135.02,477.39 L1140.04,477.00 L1145.06,474.34 L1150.08,475.17 L1155.10,472.21 L1160.12,471.17 L1165.14,472.16" fill="none" stroke="#0c3e80" stroke-width="3" stroke-linejoin="round" stroke-linecap="round"/>
<path d="M1165.14,472.16 L1170.16,472.00 L1175.18,472.50 L1180.20,475.50 L1185.22,479.00 L1190.24,483.00 L1195.26,486.50 L1200.28,490.00 L1205.30,493.00 L1210.32,497.00 L1215.34,525.00" fill="none" stroke="#8a8a8a" stroke-width="2.8" stroke-dasharray="7 3.6" stroke-linejoin="round"/>
</svg>
<span id="t1" class="t" style="left:80.20px;top:101.83px;font-size:16.5px;font-weight:400;font-style:normal;color:#f3f8fe;transform:scaleX(0.9688)">Current Status</span>
<span id="t2" class="t" style="left:262.81px;top:101.83px;font-size:16.5px;font-weight:400;font-style:normal;color:#f3f8fe;transform:scaleX(0.9885)">Epidemiologic Curves</span>
<span id="t3" class="t" style="left:472.20px;top:101.83px;font-size:16.5px;font-weight:400;font-style:normal;color:#f3f8fe;transform:scaleX(0.9846)">Cumulative Counts</span>
<span id="t4" class="t" style="left:676.81px;top:101.83px;font-size:16.5px;font-weight:400;font-style:normal;color:#f3f8fe;transform:scaleX(0.9940)">Demographics</span>
<span id="t5" class="t" style="left:843.80px;top:101.83px;font-size:16.5px;font-weight:400;font-style:normal;color:#252423;transform:scaleX(0.9696)">Testing</span>
<span id="t6" class="t" style="left:967.72px;top:101.83px;font-size:16.5px;font-weight:400;font-style:normal;color:#f3f8fe;transform:scaleX(0.9734)">COVID-like Illness Hospitalizations</span>
<span id="t7" class="t" style="left:69.66px;top:152.13px;font-size:17.8px;font-weight:700;font-style:normal;color:#1b1b1b;transform:scaleX(1.0117)">TESTING</span>
<span id="t8" class="t" style="left:970.83px;top:154.10px;font-size:16.3px;font-weight:400;font-style:normal;color:#1b1b1b;transform:scaleX(0.9774)">Data as of August 24, 2020 11:59PM PT</span>
<span id="t9" class="t" style="left:41.20px;top:212.50px;font-size:16.3px;font-weight:400;font-style:normal;color:#666666;transform:scaleX(0.9739)">Select a County</span>
<span id="t10" class="t" style="left:48.00px;top:254.20px;font-size:16.3px;font-weight:400;font-style:normal;color:#1b1b1b;transform:scaleX(1.0594)">All</span>
<span id="t11" class="t" style="left:84.78px;top:332.20px;font-size:16.3px;font-weight:400;font-style:normal;color:#ffffff;transform:scaleX(1.0270)">Download</span>
<span id="t12" class="t" style="left:254.20px;top:206.03px;font-size:15.8px;font-weight:700;font-style:normal;color:#1b1b1b;transform:scaleX(1.0380)">COVID-19 in Washington State</span>
<span id="t13" class="t" style="left:253.98px;top:227.83px;font-size:15.8px;font-weight:700;font-style:normal;color:#1269c7;transform:scaleX(1.0196)">Number of Tests by Specimen Collection Date</span>
<span id="t14" class="t" style="left:255.61px;top:251.00px;font-size:16.3px;font-weight:400;font-style:italic;color:#252423;transform:scaleX(0.9920)">Testing was initially limited, but since late June, we have averaged over 10,000 tests per day. We continue to work on increasing test</span>
<span id="t15" class="t" style="left:256.80px;top:272.30px;font-size:16.3px;font-weight:400;font-style:italic;color:#252423;transform:scaleX(0.9909)">availability and accessibility across Washington.</span>
<span id="t16" class="t" style="left:1223.71px;top:222.28px;font-size:14.2px;font-weight:400;font-style:normal;color:#2b78c8;transform:scaleX(1.0360)">Learn</span>
<span id="t17" class="t" style="left:1224.22px;top:242.18px;font-size:14.2px;font-weight:400;font-style:normal;color:#2b78c8;transform:scaleX(1.1144)">More</span>
<span id="t18" class="t" style="left:263.97px;top:320.63px;font-size:15.8px;font-weight:700;font-style:normal;color:#111111;transform:scaleX(1.0332)">Number of Tests</span>
<span id="l1" class="t" style="left:278.83px;top:353.36px;font-size:16px;font-weight:400;font-style:normal;color:#666666;transform:scaleX(0.9912)">Positive</span>
<span id="l2" class="t" style="left:354.27px;top:353.36px;font-size:16px;font-weight:400;font-style:normal;color:#666666;transform:scaleX(1.0184)">Positive (Incomplete)</span>
<span id="l3" class="t" style="left:523.78px;top:353.36px;font-size:16px;font-weight:400;font-style:normal;color:#666666;transform:scaleX(1.0345)">Negative</span>
<span id="l4" class="t" style="left:608.70px;top:353.36px;font-size:16px;font-weight:400;font-style:normal;color:#666666;transform:scaleX(1.0279)">Negative (Incomplete)</span>
<span id="l5" class="t" style="left:789.78px;top:353.36px;font-size:16px;font-weight:400;font-style:normal;color:#666666;transform:scaleX(1.0116)">Total (7 day rolling avg.)</span>
<span id="l6" class="t" style="left:980.38px;top:353.36px;font-size:16px;font-weight:400;font-style:normal;color:#666666;transform:scaleX(1.0259)">Incomplete data (7 day rolling avg.)</span>
<span id="y1" class="t" style="left:265.26px;top:379.46px;font-size:16px;font-weight:400;font-style:normal;color:#6b6b6b;transform:scaleX(1.0017)">20000</span>
<span id="y2" class="t" style="left:264.67px;top:445.56px;font-size:16px;font-weight:400;font-style:normal;color:#6b6b6b;transform:scaleX(1.0126)">15000</span>
<span id="y3" class="t" style="left:264.67px;top:511.66px;font-size:16px;font-weight:400;font-style:normal;color:#6b6b6b;transform:scaleX(1.0126)">10000</span>
<span id="y4" class="t" style="left:274.28px;top:577.76px;font-size:16px;font-weight:400;font-style:normal;color:#6b6b6b;transform:scaleX(1.0033)">5000</span>
<span id="y5" class="t" style="left:301.43px;top:643.96px;font-size:16px;font-weight:400;font-style:normal;color:#6b6b6b;transform:scaleX(1.0535)">0</span>
<span id="x1" class="t" style="left:297.15px;top:659.86px;font-size:16px;font-weight:400;font-style:normal;color:#6b6b6b;transform:scaleX(1.0256)">Mar 2020</span>
<span id="x2" class="t" style="left:454.52px;top:659.86px;font-size:16px;font-weight:400;font-style:normal;color:#6b6b6b;transform:scaleX(1.0052)">Apr 2020</span>
<span id="x3" class="t" style="left:602.26px;top:659.86px;font-size:16px;font-weight:400;font-style:normal;color:#6b6b6b;transform:scaleX(1.0344)">May 2020</span>
<span id="x4" class="t" style="left:761.24px;top:659.86px;font-size:16px;font-weight:400;font-style:normal;color:#6b6b6b;transform:scaleX(0.9895)">Jun 2020</span>
<span id="x5" class="t" style="left:914.16px;top:659.86px;font-size:16px;font-weight:400;font-style:normal;color:#6b6b6b;transform:scaleX(0.9842)">Jul 2020</span>
<span id="x6" class="t" style="left:1065.56px;top:659.86px;font-size:16px;font-weight:400;font-style:normal;color:#6b6b6b;transform:scaleX(1.0169)">Aug 2020</span>
<span id="a1" class="t" style="left:669.52px;top:683.83px;font-size:15.8px;font-weight:700;font-style:normal;color:#111111;transform:scaleX(1.0208)">Specimen Collection Date</span>
<span id="f1" class="t" style="left:508.70px;top:728.30px;font-size:16.3px;font-weight:400;font-style:normal;color:#252423;transform:scaleX(0.9899)">249,664 out of 1,380,104 test results do not have an assigned county.</span>
</body></html>
